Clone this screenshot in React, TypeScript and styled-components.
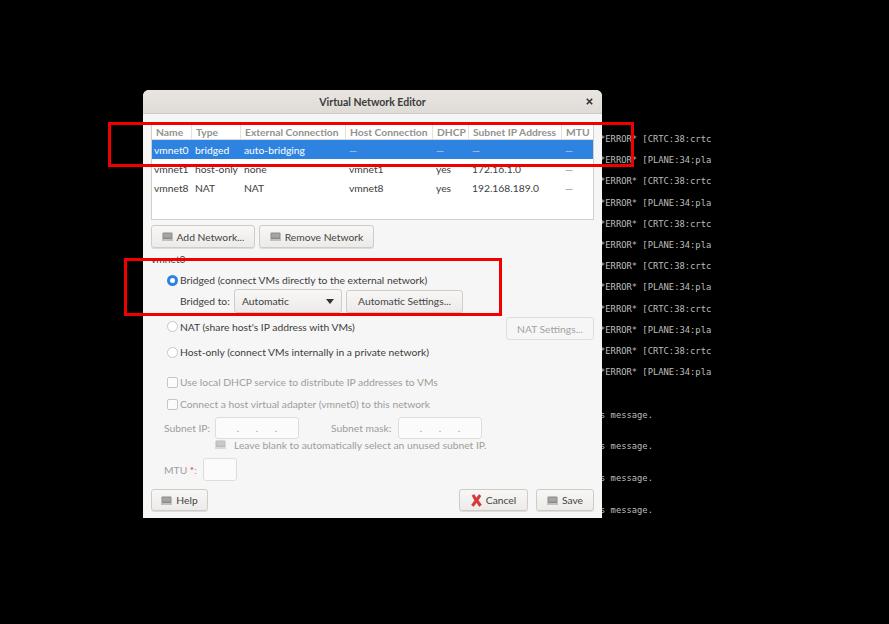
import React from "react";
import styled, { createGlobalStyle } from "styled-components";

const Global = createGlobalStyle`
  html, body { margin: 0; padding: 0; background: #000; }
  body { width: 889px; height: 624px; overflow: hidden; position: relative; font-family: Lato, "Noto Sans", sans-serif; }
`;

const Desktop = styled.div`
  position: relative;
  width: 889px;
  height: 624px;
  background: #000;
  overflow: hidden;
`;

const Terminal = styled.div`
  position: absolute;
  left: 600px;
  top: 129px;
  width: 130px;
  font-family: "DejaVu Sans Mono", monospace;
  font-size: 8.8px;
  color: #bdbdbd;
  white-space: pre;
`;
const TermLine = styled.div`
  height: 21.2px;
  line-height: 21.2px;
`;
const TermMessages = styled.div`
  margin-top: 16.5px;
`;
const MessageLine = styled.div`
  height: 31.7px;
  line-height: 31.7px;
`;

const Window = styled.div`
  position: absolute;
  left: 143px;
  top: 90px;
  width: 459px;
  height: 428px;
  background: #f6f6f6;
  border-radius: 6px 6px 0 0;
  display: flex;
  flex-direction: column;
  font-size: 10.3px;
  color: #3d3d3d;
`;
const TitleBar = styled.div`
  height: 23px;
  flex: none;
  display: flex;
  align-items: center;
  justify-content: center;
  position: relative;
  background: linear-gradient(#e9e6e1, #dfdbd6);
  border-bottom: 1px solid #cfcac4;
  border-radius: 6px 6px 0 0;
  font-weight: 700;
  font-size: 10.5px;
  color: #3c3c3c;
`;
const CloseGlyph = styled.svg`
  position: absolute;
  right: 9px;
  top: 8px;
  width: 7px;
  height: 7px;
`;
const Content = styled.div`
  flex: 1;
  display: flex;
  flex-direction: column;
  padding: 9px 8px 7px 8px;
`;
const Table = styled.div`
  height: 97px;
  flex: none;
  background: #fff;
  border: 1px solid #d3d0cc;
  box-sizing: border-box;
  width: 443px;
  overflow: hidden;
`;
const cols = "40px 49px 105px 87px 36px 93px 31px";
const HeadRow = styled.div`
  display: grid;
  grid-template-columns: ${cols};
  height: 16px;
  box-sizing: border-box;
  border-bottom: 1px solid #dcdad6;
`;
const HeadCell = styled.div`
  display: flex;
  align-items: center;
  padding-left: 4px;
  font-weight: 700;
  color: #92928f;
  white-space: nowrap;
  border-right: 1px solid #e4e2df;
  &:last-child { border-right: 0; }
`;
const Row = styled.div<{ $selected?: boolean }>`
  display: grid;
  grid-template-columns: ${cols};
  height: 19.3px;
  align-items: center;
  background: ${(p) => (p.$selected ? "#2f83e0" : "transparent")};
  color: ${(p) => (p.$selected ? "#fff" : "#3d3d3d")};
`;
const Cell = styled.div<{ $dash?: boolean }>`
  padding-left: 3px;
  white-space: nowrap;
  overflow: hidden;
  opacity: ${(p) => (p.$dash ? 0.6 : 1)};
  &:first-child { padding-left: 2px; }
`;
const Btn = styled.div<{ $disabled?: boolean; $w: number }>`
  width: ${(p) => p.$w}px;
  height: 23px;
  box-sizing: border-box;
  flex: none;
  display: flex;
  align-items: center;
  justify-content: center;
  gap: 4px;
  border: 1px solid ${(p) => (p.$disabled ? "#e0dedb" : "#cfccc8")};
  border-radius: 3px;
  background: ${(p) => (p.$disabled ? "#f6f6f6" : "linear-gradient(#f8f7f6, #ecebe9)")};
  box-shadow: ${(p) => (p.$disabled ? "none" : "0 1px 0 #dedcd9")};
  color: ${(p) => (p.$disabled ? "#a3a3a1" : "#444")};
  white-space: nowrap;
`;
const FooterBtn = styled(Btn)`
  height: 22px;
`;
const ButtonRow = styled.div`
  display: flex;
  gap: 4px;
  margin-top: 5px;
`;
const GroupLabel = styled.div`
  margin-top: 5px;
  height: 13px;
  line-height: 13px;
`;
const RadioRow = styled.div<{ $top: number }>`
  display: flex;
  align-items: center;
  gap: 2px;
  margin-left: 16px;
  margin-top: ${(p) => p.$top}px;
  height: 14px;
  white-space: nowrap;
`;
const Radio = styled.span<{ $on?: boolean }>`
  box-sizing: border-box;
  width: 11px;
  height: 11px;
  border-radius: 50%;
  flex: none;
  background: #fff;
  border: ${(p) => (p.$on ? "3px solid #2f83e0" : "1px solid #c9c6c2")};
`;
const BridgeRow = styled.div`
  display: flex;
  align-items: center;
  margin-top: 2px;
  margin-left: 29px;
  height: 24px;
`;
const BridgeLabel = styled.span`
  width: 54px;
  flex: none;
  white-space: nowrap;
`;
const Combo = styled.div`
  width: 108px;
  height: 24px;
  box-sizing: border-box;
  border: 1px solid #cfccc8;
  border-radius: 3px;
  background: linear-gradient(#f8f7f6, #ecebe9);
  display: flex;
  align-items: center;
  justify-content: space-between;
  padding: 0 7px 0 7px;
  margin-right: 4px;
`;
const ComboArrow = styled.span`
  width: 0;
  height: 0;
  border-left: 4.5px solid transparent;
  border-right: 4.5px solid transparent;
  border-top: 5px solid #333;
`;
const NatLine = styled.div`
  display: flex;
  justify-content: space-between;
  align-items: center;
  margin-top: 4px;
  height: 23px;
`;
const NatRadio = styled(RadioRow)`
  margin-top: 0;
  position: relative;
  top: -2px;
`;
const DisabledCheck = styled.div<{ $top: number }>`
  display: flex;
  align-items: center;
  gap: 2px;
  margin-left: 16px;
  margin-top: ${(p) => p.$top}px;
  height: 14px;
  color: #9d9d9b;
  white-space: nowrap;
`;
const Box = styled.span`
  box-sizing: border-box;
  width: 11px;
  height: 11px;
  flex: none;
  background: #fbfbfb;
  border: 1px solid #c9c6c2;
  border-radius: 2px;
`;
const FieldRow = styled.div`
  display: flex;
  align-items: center;
  margin-top: 6px;
  color: #9d9d9b;
  height: 22px;
`;
const FieldLabel = styled.span<{ $w: number; $ml: number }>`
  width: ${(p) => p.$w}px;
  margin-left: ${(p) => p.$ml}px;
  flex: none;
  white-space: nowrap;
`;
const Input = styled.div<{ $w: number }>`
  width: ${(p) => p.$w}px;
  height: 100%;
  box-sizing: border-box;
  flex: none;
  background: #fbfbfb;
  border: 1px solid #dfddda;
  border-radius: 3px;
  display: flex;
  align-items: center;
  justify-content: center;
  gap: 16.5px;
  color: #9d9d9b;
`;
const HintRow = styled.div`
  display: flex;
  margin-left: 64px;
  height: 18px;
  color: #9d9d9b;
  white-space: nowrap;
`;
const HintIcon = styled.span`
  width: 19px;
  flex: none;
  opacity: 0.55;
`;
const HintText = styled.span`
  margin-top: 0;
`;
const MtuRow = styled(FieldRow)`
  margin-top: 1px;
  height: 23px;
`;
const Required = styled.span`
  color: #e03030;
`;
const Footer = styled.div`
  margin-top: auto;
  display: flex;
  align-items: center;
`;
const FooterRight = styled.div`
  margin-left: auto;
  display: flex;
  gap: 8px;
`;
const Annotation = styled.div<{ $x: number; $y: number; $w: number; $h: number }>`
  position: absolute;
  left: ${(p) => p.$x}px;
  top: ${(p) => p.$y}px;
  width: ${(p) => p.$w}px;
  height: ${(p) => p.$h}px;
  box-sizing: border-box;
  border: 3px solid #f00000;
`;

const DriveIcon = () => (
  <svg width="11" height="11" viewBox="0 0 11 11">
    <rect x="0.5" y="1.5" width="10" height="7" rx="1" fill="#8b8b89" />
    <rect x="1.5" y="2.5" width="8" height="4" fill="#a5a5a3" />
    <rect x="0" y="8" width="11" height="2" fill="#c0c0be" />
  </svg>
);
const CancelIcon = () => (
  <svg width="11" height="13" viewBox="0 0 11 13">
    <path d="M1 1.5 L3.2 0.5 L5.5 4 L8 0.5 L10 2 L7.3 6.3 L10.5 10.8 L8.3 12.5 L5.5 8.6 L2.6 12.5 L0.5 11 L3.6 6.4 Z" fill="#d8393b" stroke="#b52a2a" strokeWidth="0.4" />
  </svg>
);

const errors = Array.from({ length: 12 }, (_, i) =>
  i % 2 === 0 ? "*ERROR* [CRTC:38:crtc" : "*ERROR* [PLANE:34:pla"
);

const rows = [
  ["vmnet0", "bridged", "auto-bridging", "—", "—", "—", "—"],
  ["vmnet1", "host-only", "none", "vmnet1", "yes", "172.16.1.0", "—"],
  ["vmnet8", "NAT", "NAT", "vmnet8", "yes", "192.168.189.0", "—"],
];
const heads = ["Name", "Type", "External Connection", "Host Connection", "DHCP", "Subnet IP Address", "MTU"];

export default function App() {
  return (
    <Desktop>
      <Global />
      <Terminal>
        {errors.map((t, i) => (
          <TermLine key={i}>{t}</TermLine>
        ))}
        <TermMessages>
          {[0, 1, 2, 3].map((i) => (
            <MessageLine key={i}>s message.</MessageLine>
          ))}
        </TermMessages>
      </Terminal>
      <Window>
        <TitleBar>
          Virtual Network Editor
          <CloseGlyph viewBox="0 0 7 7">
            <path d="M0.8 0.8 L6.2 6.2 M6.2 0.8 L0.8 6.2" stroke="#333" strokeWidth="1.6" />
          </CloseGlyph>
        </TitleBar>
        <Content>
          <Table>
            <HeadRow>
              {heads.map((h) => (
                <HeadCell key={h}>{h}</HeadCell>
              ))}
            </HeadRow>
            {rows.map((r, i) => (
              <Row key={r[0]} $selected={i === 0}>
                {r.map((c, j) => (
                  <Cell key={j} $dash={c === "—"}>{c}</Cell>
                ))}
              </Row>
            ))}
          </Table>
          <ButtonRow>
            <Btn $w={104}><DriveIcon />Add Network...</Btn>
            <Btn $w={115}><DriveIcon />Remove Network</Btn>
          </ButtonRow>
          <GroupLabel>vmnet0</GroupLabel>
          <RadioRow $top={7}><Radio $on />Bridged (connect VMs directly to the external network)</RadioRow>
          <BridgeRow>
            <BridgeLabel>Bridged to:</BridgeLabel>
            <Combo>Automatic<ComboArrow /></Combo>
            <Btn $w={117}>Automatic Settings...</Btn>
          </BridgeRow>
          <NatLine>
            <NatRadio $top={0}><Radio />NAT (share host's IP address with VMs)</NatRadio>
            <Btn $w={88} $disabled>NAT Settings...</Btn>
          </NatLine>
          <RadioRow $top={5}><Radio />Host-only (connect VMs internally in a private network)</RadioRow>
          <DisabledCheck $top={16}><Box />Use local DHCP service to distribute IP addresses to VMs</DisabledCheck>
          <DisabledCheck $top={8}><Box />Connect a host virtual adapter (vmnet0) to this network</DisabledCheck>
          <FieldRow>
            <FieldLabel $w={51} $ml={13}>Subnet IP:</FieldLabel>
            <Input $w={84}><span>.</span><span>.</span><span>.</span></Input>
            <FieldLabel $w={67} $ml={32}>Subnet mask:</FieldLabel>
            <Input $w={84}><span>.</span><span>.</span><span>.</span></Input>
          </FieldRow>
          <HintRow>
            <HintIcon><DriveIcon /></HintIcon>
            <HintText>Leave blank to automatically select an unused subnet IP.</HintText>
          </HintRow>
          <MtuRow>
            <FieldLabel $w={39} $ml={13}>MTU <Required>*</Required>:</FieldLabel>
            <Input $w={34} />
          </MtuRow>
          <Footer>
            <FooterBtn $w={57}><DriveIcon />Help</FooterBtn>
            <FooterRight>
              <FooterBtn $w={69}><CancelIcon />Cancel</FooterBtn>
              <FooterBtn $w={58}><DriveIcon />Save</FooterBtn>
            </FooterRight>
          </Footer>
        </Content>
      </Window>
      <Annotation $x={108} $y={122} $w={526} $h={45} />
      <Annotation $x={124} $y={258} $w={378} $h={58} />
    </Desktop>
  );
}
